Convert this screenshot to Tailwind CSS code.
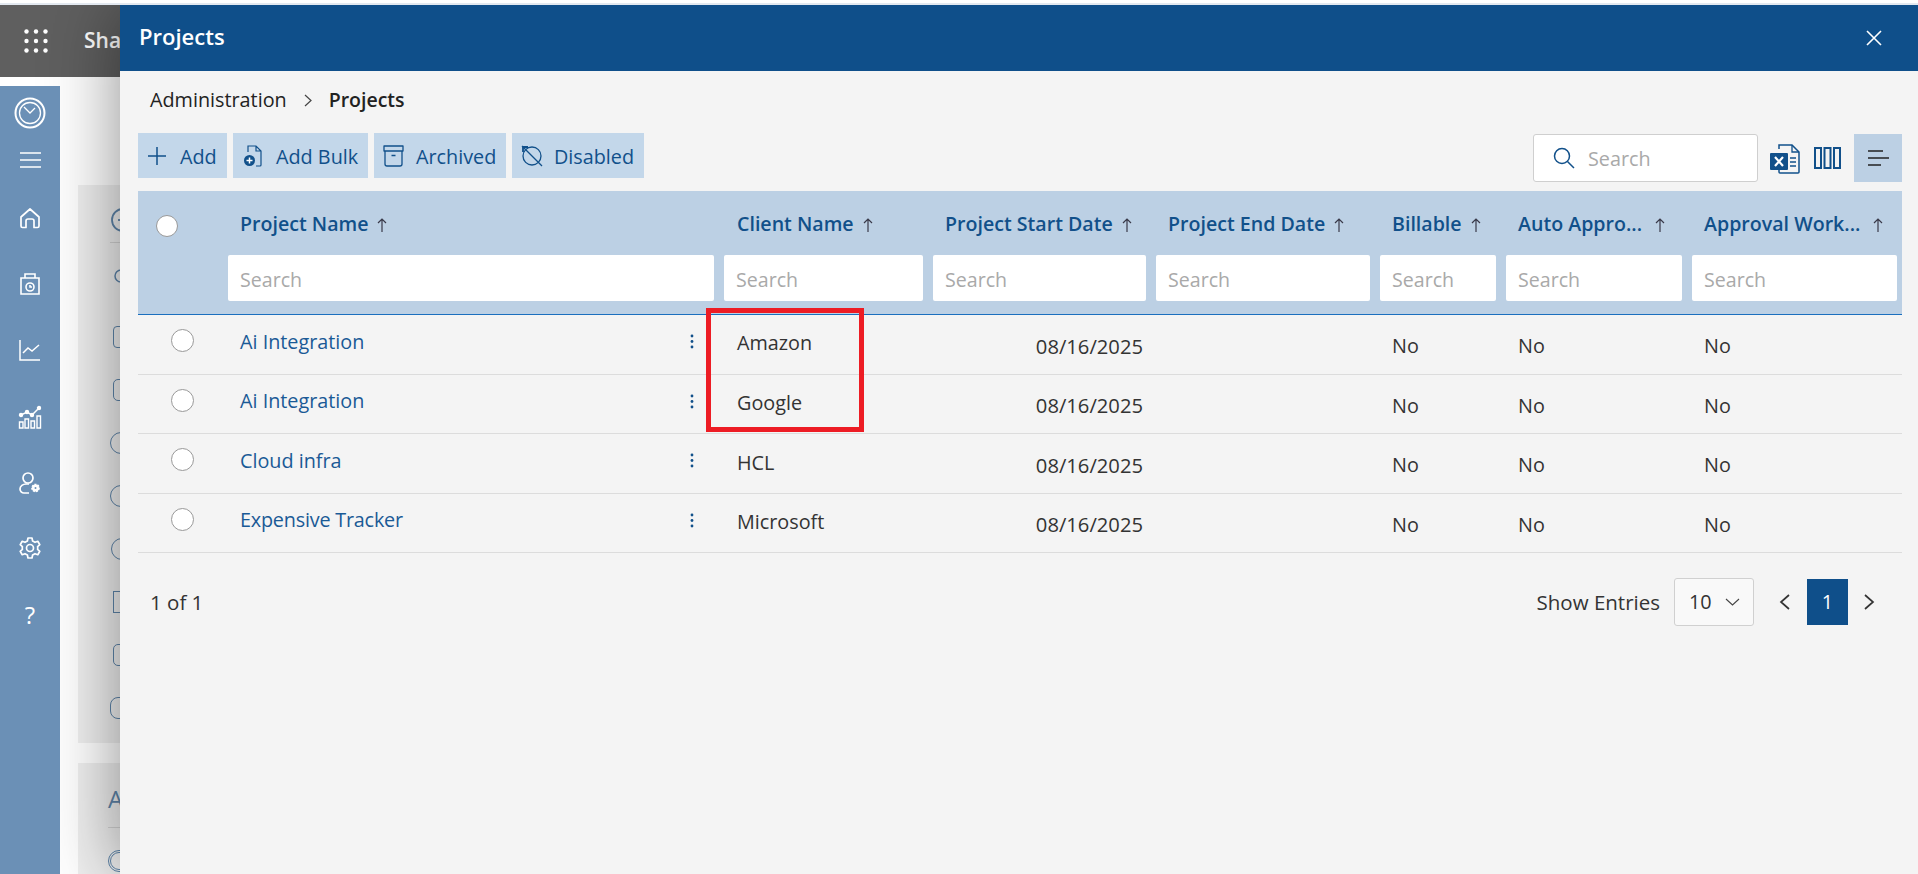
<!DOCTYPE html>
<html lang="en">
<head>
    <meta charset="UTF-8">
    <meta name="viewport" content="width=device-width, initial-scale=1.0">
    <title>Projects</title>
    <script src="https://cdn.jsdelivr.net/npm/@tailwindcss/browser@4"></script>
</head>
<body class="relative h-[874px] overflow-hidden bg-white font-['Open_Sans',sans-serif] text-[19.8px]">
    <!-- page behind the drawer -->
    <div class="relative z-10 h-[5px] border-b-2 border-[#e3e9f0] bg-white"></div>
    <header class="flex h-[72px] items-center bg-[#5f5f5f] text-white">
        <svg class="ml-[24px] h-[24px] w-[24px]" viewBox="0 0 24 24" fill="#fff">
            <circle cx="2.5" cy="2.5" r="2.2"/><circle cx="12" cy="2.5" r="2.2"/><circle cx="21.5" cy="2.5" r="2.2"/>
            <circle cx="2.5" cy="12" r="2.2"/><circle cx="12" cy="12" r="2.2"/><circle cx="21.5" cy="12" r="2.2"/>
            <circle cx="2.5" cy="21.5" r="2.2"/><circle cx="12" cy="21.5" r="2.2"/><circle cx="21.5" cy="21.5" r="2.2"/>
        </svg>
        <span class="ml-[36px] text-[21px] font-semibold">Sha</span>
    </header>
    <div class="mt-[9px] flex h-[788px] overflow-hidden">
        <!-- left nav -->
        <nav class="relative z-10 flex h-[788px] w-[60px] flex-col items-center bg-[#6b90b6] pt-[11px] text-white">
            <svg class="h-[32px] w-[32px]" viewBox="0 0 32 32" fill="none" stroke="#fff"><circle cx="16" cy="16" r="14.5" stroke-width="2"/><circle cx="16" cy="16" r="10.5" stroke-width="1.3"/><path d="M10 10l6 6 5-5" stroke-width="1.3"/></svg>
            <svg class="mt-[21px] h-[20px] w-[24px]" viewBox="0 0 24 20" fill="none" stroke="#fff" stroke-width="1.5"><path d="M2 3h21M2 10h21M2 17h21"/></svg>
            <svg class="mt-[36px] h-[24px] w-[24px]" viewBox="0 0 24 24" fill="none" stroke="#fff" stroke-width="1.7" stroke-linejoin="round"><path d="M3 11l9-8 9 8v9a1.5 1.5 0 0 1-1.5 1.500H16v-6.500a2 2 0 0 0-2-2h-4a2 2 0 0 0-2 2v6.500H4.500A1.500 1.500 0 0 1 3 20z"/></svg>
            <svg class="mt-[42px] h-[24px] w-[24px]" viewBox="0 0 24 24" fill="none" stroke="#fff" stroke-width="1.6"><path d="M3 6h18v16H3zM7 6V2h10v4"/><circle cx="12" cy="15" r="4"/><path d="M12 13v2h2"/></svg>
            <svg class="mt-[42px] h-[24px] w-[24px]" viewBox="0 0 24 24" fill="none" stroke="#fff" stroke-width="1.5"><path d="M2 2v20h20M5 15l5-5 4 3 7-6"/></svg>
            <svg class="mt-[43px] h-[24px] w-[24px]" viewBox="0 0 24 24" fill="none" stroke="#fff" stroke-width="1.4"><path d="M1.500 17h3.500v6H1.500zM7 14h3.500v9H7zM13 16h3.500v7H13zM19 11h3.500v12H19z"/><path d="M3 10l6-3 5 3 7-7" stroke-width="1.500"/><circle cx="3" cy="10" r="1.500" fill="#fff"/><circle cx="9" cy="7" r="1.500" fill="#fff"/><circle cx="14" cy="10" r="1.500" fill="#fff"/><circle cx="21" cy="3" r="1.500" fill="#fff"/></svg>
            <svg class="mt-[42px] h-[24px] w-[24px]" viewBox="0 0 24 24" fill="none" stroke="#fff" stroke-width="1.7"><circle cx="10" cy="7" r="5"/><path d="M11 22H6a4 4 0 0 1-4-4c0-3 3-5 6-5h3"/><circle cx="17.500" cy="17" r="3.500" fill="#fff" stroke-dasharray="2 1"/><circle cx="17.500" cy="17" r="1" fill="#6b90b6" stroke="none"/></svg>
            <svg class="mt-[41px] h-[24px] w-[24px]" viewBox="0 0 24 24" fill="none" stroke="#fff" stroke-width="1.7" stroke-linejoin="round"><circle cx="12" cy="12" r="3.500"/><path d="M10 2h4l.6 3 2.400 1.300 2.800-1 2 3.400-2.200 2a7 7 0 0 1 0 2.600l2.200 2-2 3.400-2.800-1-2.400 1.300-.6 3h-4l-.6-3-2.400-1.300-2.800 1-2-3.400 2.200-2a7 7 0 0 1 0-2.600l-2.200-2 2-3.400 2.800 1L9.400 5z"/></svg>
            <span class="mt-[39px] text-[24px] leading-[32px]">?</span>
        </nav>
        <!-- cards, almost fully covered by the drawer -->
        <main class="ml-[18px] flex w-[200px] flex-col gap-[20px] text-[#5f86ab]">
            <div class="mt-[99px] h-[558px] shrink-0 bg-[#f0f0f0] pt-[22px] pl-[32px]">
                <svg class="h-[26px] w-[26px]" viewBox="0 0 26 26" fill="none" stroke="#5f86ab" stroke-width="1.800"><circle cx="13" cy="13" r="11"/><path d="M8 13h10"/></svg>
                <div class="mt-[9px] mb-[20px] border-t border-[#d4d4d4]"></div>
                <div class="flex flex-col gap-[31px] pl-[3px]">
                    <svg class="h-[20px] w-[26px]" viewBox="0 0 26 20" fill="none" stroke="#5f86ab" stroke-width="1.500"><path d="M8 19a6 6 0 0 1 0-12 7 7 0 0 1 13 0"/></svg>
                    <div class="mt-[12px] h-[22px] w-[26px] rounded-[4px] border-[1.5px] border-[#5f86ab]"></div>
                    <div class="h-[22px] w-[26px] rounded-[5px] border-[1.5px] border-[#5f86ab]"></div>
                    <div class="-ml-[3px] h-[22px] w-[26px] rounded-full border-[1.5px] border-[#5f86ab]"></div>
                    <div class="-ml-[3px] h-[22px] w-[26px] rounded-full border-[1.5px] border-[#5f86ab]"></div>
                    <div class="-ml-[2px] h-[22px] w-[26px] rounded-full border-[1.5px] border-[#5f86ab]"></div>
                    <div class="h-[22px] w-[26px] border-[1.5px] border-[#5f86ab]"></div>
                    <div class="h-[22px] w-[26px] rounded-[5px] border-[1.5px] border-[#5f86ab]"></div>
                    <div class="-ml-[3px] h-[22px] w-[26px] rounded-[8px] border-[1.5px] border-[#5f86ab]"></div>
                </div>
            </div>
            <div class="h-[111px] shrink-0 bg-[#f0f0f0] pt-[20px] pl-[30px]">
                <span class="block text-[24px] leading-[32px]">A</span>
                <div class="mt-[12px] mb-[22px] border-t border-[#d4d4d4]"></div>
                <div class="h-[22px] w-[26px] rounded-full border-[3px] border-double border-[#5f86ab]"></div>
            </div>
        </main>
    </div>

    <!-- Projects drawer -->
    <section class="absolute top-[5px] right-0 bottom-0 left-[120px] bg-[#f4f4f4] shadow-[0_0_70px_rgba(0,0,0,0.45)]">
        <div class="flex h-[66px] items-center justify-between bg-[#0f4f8a] pr-[36px] pl-[19px] text-white">
            <h1 class="pb-[4px] text-[22px] font-semibold">Projects</h1>
            <svg class="h-[16px] w-[16px]" viewBox="0 0 16 16" fill="none" stroke="#fff" stroke-width="1.600"><path d="M1 1l14 14M15 1L1 15"/></svg>
        </div>
        <div class="flex h-[58px] items-center pl-[30px] text-[#222]">
            <span>Administration</span>
            <svg class="mr-[17px] ml-[17px] h-[13px] w-[8px]" viewBox="0 0 8 13" fill="none" stroke="#444" stroke-width="1.200"><path d="M1 1l6 5.500-6 5.500"/></svg>
            <span class="text-[19.5px] font-semibold">Projects</span>
        </div>
        <div class="flex items-start justify-between pr-[16px] pl-[18px] text-[#11508a]">
            <div class="mt-[4px] flex gap-[6px]">
                <button class="flex h-[45px] w-[89px] items-center bg-[#c3d7ea] pl-[10px]">
                    <svg class="h-[18px] w-[18px]" viewBox="0 0 18 18" fill="none" stroke="#11508a" stroke-width="1.500"><path d="M9 0v18M0 9h18"/></svg>
                    <span class="ml-[14px] pt-[2px]">Add</span>
                </button>
                <button class="flex h-[45px] w-[135px] items-center bg-[#c3d7ea] pl-[10px]">
                    <svg class="h-[22px] w-[20px]" viewBox="0 0 20 22" fill="none" stroke="#11508a" stroke-width="1.200"><path d="M5 7V1h8l5 5v14a1 1 0 0 1-1 1h-4M13 1v5h5"/><circle cx="6.500" cy="15.500" r="5.500" fill="#11508a" stroke="none"/><path d="M6.500 12.500v6M3.500 15.500h6" stroke="#fff" stroke-width="1.500"/></svg>
                    <span class="ml-[13px] pt-[2px]">Add Bulk</span>
                </button>
                <button class="flex h-[45px] w-[132px] items-center bg-[#c3d7ea] pl-[9px]">
                    <svg class="h-[22px] w-[21px]" viewBox="0 0 21 22" fill="none" stroke="#11508a" stroke-width="1.300" stroke-linejoin="round"><path d="M1 1h19v5H1zM2 6v13a2 2 0 0 0 2 2h13a2 2 0 0 0 2-2V6M8.500 10.500h4"/></svg>
                    <span class="ml-[12px] pt-[2px]">Archived</span>
                </button>
                <button class="flex h-[45px] w-[132px] items-center bg-[#c3d7ea] pl-[9px]">
                    <svg class="h-[22px] w-[22px]" viewBox="0 0 22 22" fill="none" stroke="#11508a" stroke-width="1.300"><circle cx="11" cy="11" r="9"/><path d="M1 1l20 20" /><path d="M2 2v5M2 2h5" stroke-width="1.800"/></svg>
                    <span class="ml-[11px] pt-[2px]">Disabled</span>
                </button>
            </div>
            <div class="mt-[5px] flex items-center">
                <label class="flex h-[48px] w-[225px] items-center rounded-[3px] border border-[#cfcfcf] bg-white pl-[19px]">
                    <svg class="h-[22px] w-[22px] shrink-0" viewBox="0 0 22 22" fill="none" stroke="#11508a" stroke-width="1.500"><circle cx="9" cy="9" r="7.500"/><path d="M14.500 14.500L21 21"/></svg>
                    <input class="ml-[13px] w-[150px] pt-[2px] outline-none placeholder:text-[#a9a9a9]" placeholder="Search">
                </label>
                <svg class="mt-[2px] ml-[12px] h-[30px] w-[30px]" viewBox="0 0 30 30" fill="none"><path d="M9 5V1h13l7 7v20a1 1 0 0 1-1 1H10a1 1 0 0 1-1-1v-3" stroke="#11508a" stroke-width="1.500"/><path d="M22 1v7h7M20 14h6M20 18h6M20 22h6" stroke="#11508a" stroke-width="1.300"/><rect x="0" y="9" width="18" height="17" rx="1" fill="#11508a"/><path d="M5 13l8 9M13 13l-8 9" stroke="#fff" stroke-width="2.200"/></svg>
                <svg class="ml-[14px] h-[22px] w-[27px]" viewBox="0 0 27 22" fill="none" stroke="#11508a" stroke-width="2"><rect x="1" y="1" width="6" height="20"/><rect x="10.500" y="1" width="6" height="20"/><rect x="20" y="1" width="6" height="20"/></svg>
                <button class="ml-[13px] flex h-[48px] w-[48px] items-center justify-center bg-[#bcd0e4]">
                    <svg class="h-[16px] w-[22px]" viewBox="0 0 22 16" fill="none" stroke="#222" stroke-width="1.500"><path d="M1 1h15M1 8h21M1 15h13"/></svg>
                </button>
            </div>
        </div>
        <div class="mx-[18px] mt-[9px] w-[1764px]">
            <table class="w-[1764px] table-fixed border-separate border-spacing-0">
                <colgroup>
                    <col class="w-[85px]"><col class="w-[496px]"><col class="w-[209px]"><col class="w-[223px]"><col class="w-[224px]"><col class="w-[126px]"><col class="w-[186px]"><col class="w-[215px]">
                </colgroup>
                <thead class="bg-[#bcd0e4] text-left text-[19.6px] font-semibold text-[#11508a]">
                    <tr>
                        <th class="h-[124px] border-b border-[#1a6fbe] pb-[54px] font-semibold">
                            <span class="ml-[18px] block h-[22px] w-[22px] rounded-full border border-[#999] bg-white"></span>
                        </th>
                        <th class="border-b border-[#1a6fbe] font-semibold"><div class="flex h-[64px] items-center pt-[2px] pl-[17px]">Project Name<svg class="mt-[1px] ml-[9px] h-[14px] w-[10px]" viewBox="0 0 10 14" fill="none" stroke="#3a3a4a" stroke-width="1.200"><path d="M5 14V1M1 5l4-4 4 4"/></svg></div><div class="px-[5px] pb-[13px]"><input class="h-[46px] w-full rounded-[2px] bg-white px-[12px] pt-[2px] font-normal outline-none placeholder:text-[#a9a9a9]" placeholder="Search"></div></th>
                        <th class="border-b border-[#1a6fbe] font-semibold"><div class="flex h-[64px] items-center pt-[2px] pl-[18px]">Client Name<svg class="mt-[1px] ml-[9px] h-[14px] w-[10px]" viewBox="0 0 10 14" fill="none" stroke="#3a3a4a" stroke-width="1.200"><path d="M5 14V1M1 5l4-4 4 4"/></svg></div><div class="px-[5px] pb-[13px]"><input class="h-[46px] w-full rounded-[2px] bg-white px-[12px] pt-[2px] font-normal outline-none placeholder:text-[#a9a9a9]" placeholder="Search"></div></th>
                        <th class="border-b border-[#1a6fbe] font-semibold"><div class="flex h-[64px] items-center pt-[2px] pl-[17px]">Project Start Date<svg class="mt-[1px] ml-[9px] h-[14px] w-[10px]" viewBox="0 0 10 14" fill="none" stroke="#3a3a4a" stroke-width="1.200"><path d="M5 14V1M1 5l4-4 4 4"/></svg></div><div class="px-[5px] pb-[13px]"><input class="h-[46px] w-full rounded-[2px] bg-white px-[12px] pt-[2px] font-normal outline-none placeholder:text-[#a9a9a9]" placeholder="Search"></div></th>
                        <th class="border-b border-[#1a6fbe] font-semibold"><div class="flex h-[64px] items-center pt-[2px] pl-[17px]">Project End Date<svg class="mt-[1px] ml-[9px] h-[14px] w-[10px]" viewBox="0 0 10 14" fill="none" stroke="#3a3a4a" stroke-width="1.200"><path d="M5 14V1M1 5l4-4 4 4"/></svg></div><div class="px-[5px] pb-[13px]"><input class="h-[46px] w-full rounded-[2px] bg-white px-[12px] pt-[2px] font-normal outline-none placeholder:text-[#a9a9a9]" placeholder="Search"></div></th>
                        <th class="border-b border-[#1a6fbe] font-semibold"><div class="flex h-[64px] items-center pt-[2px] pl-[17px]">Billable<svg class="mt-[1px] ml-[9px] h-[14px] w-[10px]" viewBox="0 0 10 14" fill="none" stroke="#3a3a4a" stroke-width="1.200"><path d="M5 14V1M1 5l4-4 4 4"/></svg></div><div class="px-[5px] pb-[13px]"><input class="h-[46px] w-full rounded-[2px] bg-white px-[12px] pt-[2px] font-normal outline-none placeholder:text-[#a9a9a9]" placeholder="Search"></div></th>
                        <th class="border-b border-[#1a6fbe] font-semibold"><div class="flex h-[64px] items-center pt-[2px] pl-[17px]">Auto Appro...<svg class="mt-[1px] ml-[13px] h-[14px] w-[10px]" viewBox="0 0 10 14" fill="none" stroke="#3a3a4a" stroke-width="1.200"><path d="M5 14V1M1 5l4-4 4 4"/></svg></div><div class="px-[5px] pb-[13px]"><input class="h-[46px] w-full rounded-[2px] bg-white px-[12px] pt-[2px] font-normal outline-none placeholder:text-[#a9a9a9]" placeholder="Search"></div></th>
                        <th class="border-b border-[#1a6fbe] font-semibold"><div class="flex h-[64px] items-center pt-[2px] pl-[17px]">Approval Work...<svg class="mt-[1px] ml-[13px] h-[14px] w-[10px]" viewBox="0 0 10 14" fill="none" stroke="#3a3a4a" stroke-width="1.200"><path d="M5 14V1M1 5l4-4 4 4"/></svg></div><div class="px-[5px] pb-[13px]"><input class="h-[46px] w-full rounded-[2px] bg-white px-[12px] pt-[2px] font-normal outline-none placeholder:text-[#a9a9a9]" placeholder="Search"></div></th>
                    </tr>
                </thead>
                <tbody class="text-[#333]">
                    <tr>
                        <td class="h-[60px] border-b border-[#dcdcdc] pb-[8px]"><span class="ml-[33px] block h-[23px] w-[23px] rounded-full border border-[#999] bg-white"></span></td>
                        <td class="border-b border-[#dcdcdc] pb-[6px] pl-[17px] text-[#1a5a96]"><div class="flex items-center justify-between pr-[25px]">Ai Integration<svg class="h-[15px] w-[4px]" viewBox="0 0 4 15" fill="#11508a"><circle cx="2" cy="2" r="1.400"/><circle cx="2" cy="7.500" r="1.400"/><circle cx="2" cy="13" r="1.400"/></svg></div></td>
                        <td class="border-b border-[#dcdcdc] pb-[3px] pl-[18px]">Amazon</td>
                        <td class="border-b border-[#dcdcdc] pt-[3px] pr-[8px] text-right text-[20.2px]">08/16/2025</td>
                        <td class="border-b border-[#dcdcdc]"></td>
                        <td class="border-b border-[#dcdcdc] pt-[3px] pl-[17px]">No</td>
                        <td class="border-b border-[#dcdcdc] pt-[3px] pl-[17px]">No</td>
                        <td class="border-b border-[#dcdcdc] pt-[3px] pl-[17px]">No</td>
                    </tr>
                    <tr>
                        <td class="h-[59px] border-b border-[#dcdcdc] pb-[8px]"><span class="ml-[33px] block h-[23px] w-[23px] rounded-full border border-[#999] bg-white"></span></td>
                        <td class="border-b border-[#dcdcdc] pb-[6px] pl-[17px] text-[#1a5a96]"><div class="flex items-center justify-between pr-[25px]">Ai Integration<svg class="h-[15px] w-[4px]" viewBox="0 0 4 15" fill="#11508a"><circle cx="2" cy="2" r="1.400"/><circle cx="2" cy="7.500" r="1.400"/><circle cx="2" cy="13" r="1.400"/></svg></div></td>
                        <td class="border-b border-[#dcdcdc] pb-[3px] pl-[18px]">Google</td>
                        <td class="border-b border-[#dcdcdc] pt-[3px] pr-[8px] text-right text-[20.2px]">08/16/2025</td>
                        <td class="border-b border-[#dcdcdc]"></td>
                        <td class="border-b border-[#dcdcdc] pt-[3px] pl-[17px]">No</td>
                        <td class="border-b border-[#dcdcdc] pt-[3px] pl-[17px]">No</td>
                        <td class="border-b border-[#dcdcdc] pt-[3px] pl-[17px]">No</td>
                    </tr>
                    <tr>
                        <td class="h-[60px] border-b border-[#dcdcdc] pb-[8px]"><span class="ml-[33px] block h-[23px] w-[23px] rounded-full border border-[#999] bg-white"></span></td>
                        <td class="border-b border-[#dcdcdc] pb-[6px] pl-[17px] text-[#1a5a96]"><div class="flex items-center justify-between pr-[25px]">Cloud infra<svg class="h-[15px] w-[4px]" viewBox="0 0 4 15" fill="#11508a"><circle cx="2" cy="2" r="1.400"/><circle cx="2" cy="7.500" r="1.400"/><circle cx="2" cy="13" r="1.400"/></svg></div></td>
                        <td class="border-b border-[#dcdcdc] pb-[2px] pl-[18px]">HCL</td>
                        <td class="border-b border-[#dcdcdc] pt-[3px] pr-[8px] text-right text-[20.2px]">08/16/2025</td>
                        <td class="border-b border-[#dcdcdc]"></td>
                        <td class="border-b border-[#dcdcdc] pt-[3px] pl-[17px]">No</td>
                        <td class="border-b border-[#dcdcdc] pt-[3px] pl-[17px]">No</td>
                        <td class="border-b border-[#dcdcdc] pt-[3px] pl-[17px]">No</td>
                    </tr>
                    <tr>
                        <td class="h-[59px] border-b border-[#dcdcdc] pb-[8px]"><span class="ml-[33px] block h-[23px] w-[23px] rounded-full border border-[#999] bg-white"></span></td>
                        <td class="border-b border-[#dcdcdc] pb-[6px] pl-[17px] text-[#1a5a96]"><div class="flex items-center justify-between pr-[25px]"><span class="tracking-[-0.2px]">Expensive Tracker</span><svg class="h-[15px] w-[4px]" viewBox="0 0 4 15" fill="#11508a"><circle cx="2" cy="2" r="1.400"/><circle cx="2" cy="7.500" r="1.400"/><circle cx="2" cy="13" r="1.400"/></svg></div></td>
                        <td class="border-b border-[#dcdcdc] pb-[3px] pl-[18px]">Microsoft</td>
                        <td class="border-b border-[#dcdcdc] pt-[3px] pr-[8px] text-right text-[20.2px]">08/16/2025</td>
                        <td class="border-b border-[#dcdcdc]"></td>
                        <td class="border-b border-[#dcdcdc] pt-[3px] pl-[17px]">No</td>
                        <td class="border-b border-[#dcdcdc] pt-[3px] pl-[17px]">No</td>
                        <td class="border-b border-[#dcdcdc] pt-[3px] pl-[17px]">No</td>
                    </tr>
                </tbody>
            </table>
            <div class="mt-[25px] flex h-[48px] items-center justify-between text-[#333]">
                <span class="pl-[12px] text-[20.5px]">1 of 1</span>
                <div class="flex items-center">
                    <span class="text-[20.5px] font-medium">Show Entries</span>
                    <div class="ml-[14px] flex h-[48px] w-[80px] items-center justify-between rounded-[3px] border border-[#d0d0d0] bg-[#f9f9f9] pr-[13px] pl-[14px]">
                        <span>10</span>
                        <svg class="h-[8px] w-[15px]" viewBox="0 0 15 8" fill="none" stroke="#444" stroke-width="1.100"><path d="M1 1l6.500 6L14 1"/></svg>
                    </div>
                    <svg class="ml-[25px] h-[16px] w-[11px]" viewBox="0 0 11 16" fill="none" stroke="#333" stroke-width="1.700"><path d="M10 1L2 8l8 7"/></svg>
                    <div class="ml-[17px] flex h-[46px] w-[41px] items-center justify-center bg-[#0f4f8a] text-white">1</div>
                    <svg class="mr-[27px] ml-[16px] h-[16px] w-[11px]" viewBox="0 0 11 16" fill="none" stroke="#333" stroke-width="1.700"><path d="M1 1l8 7-8 7"/></svg>
                </div>
            </div>
        </div>
        <!-- red annotation box drawn over the client column -->
        <div class="absolute top-[303px] left-[586px] h-[124px] w-[158px] border-[5px] border-[#ed1c24]"></div>
    </section>
</body>
</html>
